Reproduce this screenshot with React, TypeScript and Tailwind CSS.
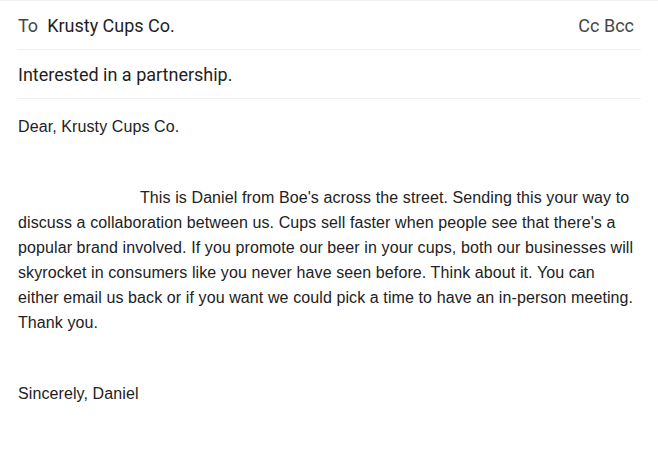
export default function App() {
  return (
    <div className="w-[658px] h-[453px] bg-white border-t border-[#eef0f2] overflow-hidden">
      <div className="mx-[17px] h-[49px] border-b border-[#eef0f2] flex items-center justify-between pl-[1px] pr-[7px] font-['Roboto',sans-serif] text-[18px]">
        <div className="flex items-center">
          <span className="text-[#444746]">To</span>
          <span className="ml-[9px] text-[#1f1f1f]">Krusty Cups Co.</span>
        </div>
        <div className="text-[#444746]">Cc Bcc</div>
      </div>
      <div className="mx-[17px] h-[49px] border-b border-[#eef0f2] flex items-center pl-[1px] font-['Roboto',sans-serif] text-[18px] text-[#1f1f1f]">
        Interested in a partnership.
      </div>
      <div className="pl-[18px] w-[636px] pt-[15px] font-['Liberation_Sans',sans-serif] text-[16px] leading-[25px] tracking-[0.1px] text-[#222222]">
        <div className="mb-[46px]">Dear, Krusty Cups Co.</div>
        <p className="indent-[122px]">
          This is Daniel from Boe's across the street. Sending this your way to discuss a collaboration between us. Cups sell faster when people see that there's a popular brand involved. If you promote our beer in your cups, both our businesses will skyrocket in consumers like you never have seen before. Think about it. You can either email us back or if you want we could pick a time to have an in-person meeting. Thank you.
        </p>
        <div className="mt-[46px]">Sincerely, Daniel</div>
      </div>
    </div>
  );
}
